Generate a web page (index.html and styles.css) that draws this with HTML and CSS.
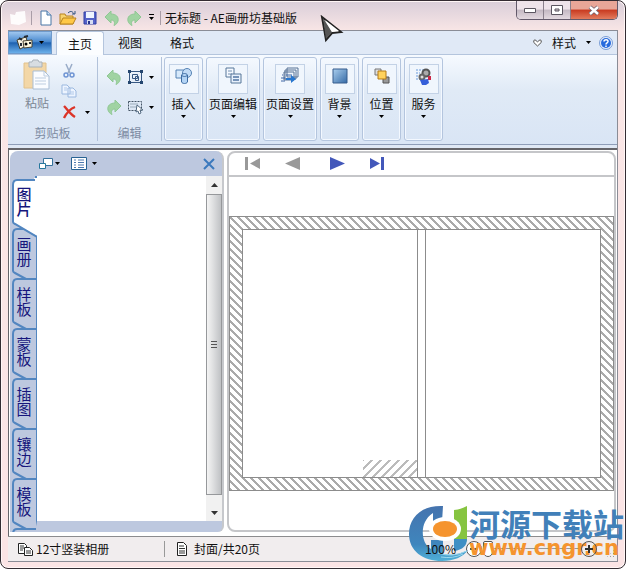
FILE: index.html
```html
<!DOCTYPE html>
<html lang="zh-CN">
<head>
<meta charset="utf-8">
<title>无标题 - AE画册坊基础版</title>
<link rel="stylesheet" href="styles.css">
</head>
<body>
<svg class="defs" aria-hidden="true">
  <symbol id="undo" viewBox="0 0 16 16"><path d="M1 7 7 1v3c5 0 8 3 7 7-.4 2-2 3.500-4 4.500 1-3 .5-5.500-3-5.500v3z" fill="#a0d3a2" stroke="#8fc794"/></symbol>
  <symbol id="redo" viewBox="0 0 16 16"><path d="M15 7 9 1v3C4 4 1 7 2 11c.4 2 2 3.500 4 4.500-1-3-.5-5.500 3-5.500v3z" fill="#a0d3a2" stroke="#8fc794"/></symbol>
  <symbol id="down" viewBox="0 0 5 3"><path d="M0 0h5L2.500 3z" fill="#000"/></symbol>
  <symbol id="tabshape" viewBox="0 0 26 58"><path d="M26 1H7Q3 1 3 6v37q0 1 2 2l11 6h10z" fill="#bdc8df"/><path d="M26 1H7Q3 1 3 6v37q0 1 2 2l11 6" fill="none" stroke="#5286c0" stroke-width="2"/></symbol>
</svg>
<div class="window">
  <header class="titlebar">
    <span class="cell app"><svg width="18" height="16" viewBox="0 0 18 16"><path d="M1 4 6 5l1-3 9-1 1 11-7 3-8-1z" fill="#fff" opacity=".9"/></svg></span>
    <i class="rule"></i>
    <button class="cell" aria-label="新建"><svg width="14" height="16" viewBox="0 0 14 16"><path d="M2 1h6l4 4v10H2z" fill="#fff" stroke="#4877a6"/><path d="M8 1v4h4" fill="#c9def5" stroke="#4877a6"/></svg></button>
    <button class="cell" aria-label="打开"><svg width="18" height="16" viewBox="0 0 18 16"><path d="M1 14V4h5l1 2h7v8z" fill="#f8d36e" stroke="#b98320"/><path d="M1 14 4 8h13l-3 6z" fill="#ffc847" stroke="#b98320"/><path d="M9 3c3-3 5-1 6 1m1-3v3h-3" fill="none" stroke="#33537f"/></svg></button>
    <button class="cell" aria-label="保存"><svg width="14" height="14" viewBox="0 0 14 14"><path d="M1 1h12v12H1z" fill="#5562c8" stroke="#303ea4"/><path d="M3 1h8v6H3z" fill="#eef4ff"/><path d="M4 9h6v4H4z" fill="#d5dcf2"/><path d="M5 10h2v3H5z" fill="#27338c"/></svg></button>
    <button class="cell" aria-label="撤销"><svg width="16" height="16"><use href="#undo"/></svg></button>
    <button class="cell" aria-label="重做"><svg width="16" height="16"><use href="#redo"/></svg></button>
    <button class="cell narrow" aria-label="自定义"><svg width="5" height="7" viewBox="0 0 5 7"><path d="M0 0h5v1H0zM0 3h5L2.500 6z"/></svg></button>
    <i class="rule"></i>
    <h1>无标题 - AE画册坊基础版</h1>
    <div class="winbtns">
      <button aria-label="最小化"><svg width="14" height="8" viewBox="0 0 14 8"><path d="M1.500 2.500h11v4h-11z" fill="#fff" stroke="#5b5661"/></svg></button>
      <button aria-label="最大化"><svg width="12" height="10" viewBox="0 0 12 10"><path d="M.5.5h11v9H.5zM4 4v2h4V4z" fill="#fff" fill-rule="evenodd" stroke="#5b5661"/></svg></button>
      <button class="close" aria-label="关闭"><svg width="12" height="11" viewBox="0 0 12 11"><path d="m2 2 8 7m0-7L2 9" stroke="#70606c" stroke-width="4"/><path d="m2 2 8 7m0-7L2 9" stroke="#fff" stroke-width="2.400"/></svg></button>
    </div>
  </header>

  <div class="client">
    <nav class="tabbar">
      <button class="appmenu" aria-label="应用程序菜单"><svg width="18" height="16" viewBox="0 0 18 16"><path d="m1 5 9-3 2 8-8 4z" fill="#f6efdd" stroke="#46412e"/><path d="m7 6 9-1v7l-8 1z" fill="#fff9df" stroke="#4b4535"/><circle cx="10" cy="9" r="1.500"/><path d="m3 3 3 2M5 8v3M13 8h2M8 2l4-1" stroke="#252c36" stroke-width="2"/></svg><svg class="arrow" width="5" height="3"><use href="#down"/></svg></button>
      <button class="tab active">主页</button>
      <button class="tab">视图</button>
      <button class="tab">格式</button>
      <div class="right">
        <svg width="9" height="8" viewBox="0 0 9 8"><path d="M4.500 7 .8 3.500V1.500L2 .8l2.500 2L7 .8l1.200.7v2z" fill="#fff" stroke="#555"/></svg>
        <button class="style">样式 <svg class="arrow" width="5" height="3"><use href="#down"/></svg></button>
        <button class="help" aria-label="帮助"><svg width="14" height="14" viewBox="0 0 14 14"><circle cx="7" cy="7" r="6.500" fill="#e7effc" stroke="#7a9dd6"/><circle cx="7" cy="7" r="5" fill="#286bdd"/><path d="M5 5.500C5 3 9.300 3 9 5.500 8.800 7 7 6.700 7 8.500M7 9.500v1.500" fill="none" stroke="#fff" stroke-width="1.500"/></svg></button>
      </div>
    </nav>

    <section class="ribbon">
      <div class="group clip">
        <div class="tools">
          <button class="paste"><svg width="28" height="32" viewBox="0 0 28 32"><path d="M1 4h22v25H1z" fill="#f3d7a7" stroke="#e2c28c"/><path d="M6 3h3l1-2h5l1 2h3v5H6z" fill="#d8dde2" stroke="#a9b2ba"/><path d="M10 12h11l5 5v13H10z" fill="#fafcff" stroke="#a9bdd4"/><path d="M21 12v5h5M12 19h11m-11 3h11m-11 3h11" fill="none" stroke="#bdcde0"/></svg><span>粘贴</span></button>
          <div class="mini">
            <button aria-label="剪切"><svg width="12" height="15" viewBox="0 0 12 15"><path d="m3 1 4 9M9 1 5 10" stroke="#99acc8" stroke-width="1.500"/><circle cx="3" cy="12" r="2" fill="none" stroke="#6f94d3" stroke-width="1.500"/><circle cx="9" cy="12" r="2" fill="none" stroke="#6f94d3" stroke-width="1.500"/></svg></button>
            <button aria-label="复制"><svg width="16" height="14" viewBox="0 0 16 14"><path d="M1 1h5l3 3v6H1zM7 4h5l3 3v6H7z" fill="#edf4ff" stroke="#9bb8df"/><path d="M3 4h3M3 6h3m3 2h4m-4 2h4" stroke="#b1c9e9"/></svg></button>
            <button aria-label="删除"><svg width="15" height="14" viewBox="0 0 15 14"><path d="M2 1c3 3 6 8 11 11M13 2C8 4 4 9 2 13" fill="none" stroke="#dc3428" stroke-width="2.400"/></svg></button>
            <button class="drop" aria-label="删除选项"><svg width="5" height="3"><use href="#down"/></svg></button>
          </div>
        </div>
        <span class="caption">剪贴板</span>
      </div>
      <div class="group edit">
        <div class="grid">
          <button aria-label="撤销"><svg width="16" height="16"><use href="#undo"/></svg></button>
          <button aria-label="组合"><svg width="17" height="16" viewBox="0 0 17 16"><path d="M2.500 2.500h12v11h-12zM5.500 5.500h5v4h-5zM8.500 7.500h3v4h-3z" fill="none" stroke="#365782"/><path d="M1 1h3v3H1zM13 1h3v3h-3zM1 12h3v3H1zM13 12h3v3h-3z" fill="#24466f"/></svg></button>
          <button aria-label="组合选项"><svg width="5" height="3"><use href="#down"/></svg></button>
          <button aria-label="重做"><svg width="16" height="16"><use href="#redo"/></svg></button>
          <button aria-label="选择"><svg width="17" height="16" viewBox="0 0 17 16"><path d="M1.500 2.500h13v9h-13z" fill="none" stroke="#456" stroke-dasharray="2 1"/><path d="M3 5h8M3 8h8" stroke="#9aabb9"/><path d="m10 6 6 5h-3l1 3-2 1-1-3-2 1z" fill="#fff" stroke="#536a80"/></svg></button>
          <button aria-label="选择选项"><svg width="5" height="3"><use href="#down"/></svg></button>
        </div>
        <span class="caption">编辑</span>
      </div>
      <div class="boxes">
        <button class="box"><span class="frame"><svg width="18" height="18" viewBox="0 0 18 18"><path d="M1 3h9v8H1z" fill="#d6e9fb" stroke="#5582b4"/><circle cx="12" cy="6" r="4.500" fill="#c1dbf6" stroke="#5582b4"/><path d="M6.500 8v7c1 2 5 2 6 0V8c-1-2-5-2-6 0zm0 0c1 2 5 2 6 0" fill="#b3d4f5" stroke="#3e6ca2"/></svg></span>插入<svg width="5" height="3"><use href="#down"/></svg></button>
        <button class="box"><span class="frame"><svg width="18" height="18" viewBox="0 0 18 18"><path d="M2 1h8v9H2z" fill="#f5f9ff" stroke="#577699"/><path d="M4 4h4M4 7h4" stroke="#7591b2"/><path d="M7 7h10v9H7z" fill="#e8f1fc" stroke="#577699"/><path d="M9 10h6m-6 3h6" stroke="#5275a2" stroke-width="1.500"/></svg></span>页面编辑<svg width="5" height="3"><use href="#down"/></svg></button>
        <button class="box"><span class="frame"><svg width="18" height="18" viewBox="0 0 18 18"><path d="M6 1h11v9H6zM4 3h11v9H4zM3 5h10v8H3z" fill="#edf4fc" stroke="#587395"/><path d="M5 8h6M1 8h1M0 11h4M0 14h4" stroke="#3f66a5"/><path d="M5 11h5V8l5 4-5 4v-3H5z" fill="#2877cf"/></svg></span>页面设置<svg width="5" height="3"><use href="#down"/></svg></button>
        <button class="box"><span class="frame"><svg width="16" height="16" viewBox="0 0 16 16"><defs><linearGradient id="blue" x2="1" y2="1"><stop stop-color="#abcfee"/><stop offset="1" stop-color="#356aa6"/></linearGradient></defs><path d="M1 1h14v14H1z" fill="url(#blue)" stroke="#365c8d"/></svg></span>背景<svg width="5" height="3"><use href="#down"/></svg></button>
        <button class="box"><span class="frame"><svg width="16" height="16" viewBox="0 0 16 16"><path d="M1 1h6v6H1z" fill="#ddd" stroke="#777"/><path d="M9 9h6v6H9z" fill="#999" stroke="#555"/><path d="M4 3h8v8H4z" fill="#ffd25c" stroke="#b57b17"/></svg></span>位置<svg width="5" height="3"><use href="#down"/></svg></button>
        <button class="box"><span class="frame"><svg width="17" height="17" viewBox="0 0 17 17"><path d="M1 2h9M1 5h4M1 8h3M1 11h4" stroke="#699adb" stroke-dasharray="2 1"/><circle cx="11" cy="5" r="3.500" fill="#aaa" stroke="#555" stroke-width="2"/><circle cx="7" cy="9" r="2.500" fill="#ddd" stroke="#666" stroke-width="2"/><path d="M13 8h3v4h-3z" fill="#cb2747"/><path d="m5 12 8-1 1 4-3 2H7z" fill="#355fd9"/></svg></span>服务<svg width="5" height="3"><use href="#down"/></svg></button>
      </div>
    </section>

    <main class="work">
      <aside class="side">
        <div class="sidehead">
          <button aria-label="层叠"><svg width="14" height="13" viewBox="0 0 14 13"><path d="M4.500 1.500h9v7h-9z" fill="#fff" stroke="#36729d"/><path d="M.5 6.500h6v5h-6z" fill="#fff" stroke="#26779d"/></svg><svg width="5" height="3"><use href="#down"/></svg></button>
          <button class="second" aria-label="列表"><svg width="16" height="13" viewBox="0 0 16 13"><path d="M.5.5h15v12H.5z" fill="#fff" stroke="#286293"/><path d="M3 3h2M3 5.500h2M3 8h2M3 10.500h2M7 3h6M7 5.500h6M7 8h6M7 10.500h6" stroke="#4c79af"/></svg><svg width="5" height="3"><use href="#down"/></svg></button>
          <button class="x" aria-label="关闭面板"><svg width="12" height="12" viewBox="0 0 12 12"><path d="m1 1 10 10M11 1 1 11" stroke="#3b79bd" stroke-width="2"/></svg></button>
        </div>
        <div class="sidebody">
          <div class="sidetabs">
            <button class="stab on"><svg viewBox="0 0 27 60"><path d="M27 0h-3v2H7Q3 2 3 7v37q0 1 2 2l22 12z" fill="#fff"/><path d="M25 2H7Q3 2 3 7v37q0 1 2 2l22 13" fill="none" stroke="#5286c0" stroke-width="2"/></svg><span>图片</span></button>
            <button class="stab"><svg viewBox="0 0 26 58"><use href="#tabshape"/></svg><span>画册</span></button>
            <button class="stab"><svg viewBox="0 0 26 58"><use href="#tabshape"/></svg><span>样板</span></button>
            <button class="stab"><svg viewBox="0 0 26 58"><use href="#tabshape"/></svg><span>蒙板</span></button>
            <button class="stab"><svg viewBox="0 0 26 58"><use href="#tabshape"/></svg><span>插图</span></button>
            <button class="stab"><svg viewBox="0 0 26 58"><use href="#tabshape"/></svg><span>镶边</span></button>
            <button class="stab"><svg viewBox="0 0 26 58"><use href="#tabshape"/></svg><span>模板</span></button>
            <button class="stab" aria-label="更多"><svg viewBox="0 0 26 58"><use href="#tabshape"/></svg></button>
          </div>
          <div class="list"></div>
          <div class="scroll">
            <button aria-label="向上"><svg width="7" height="4" viewBox="0 0 7 4"><path d="M0 4h7L3.500 0z" fill="#333"/></svg></button>
            <div class="thumb"><svg width="6" height="8" viewBox="0 0 6 8"><path d="M0 .5h6M0 3.500h6M0 6.500h6" stroke="#555"/></svg></div>
            <button class="dn" aria-label="向下"><svg width="7" height="4" viewBox="0 0 7 4"><path d="M0 0h7L3.500 4z" fill="#333"/></svg></button>
          </div>
        </div>
      </aside>
      <section class="editor">
        <div class="pager">
          <button aria-label="首页"><svg width="15" height="13" viewBox="0 0 15 13"><path d="M0 0h3v13H0zM15 1v11L5 6.500z" fill="#999"/></svg></button>
          <button aria-label="上一页"><svg width="15" height="13" viewBox="0 0 15 13"><path d="M15 0v13L0 6.500z" fill="#999"/></svg></button>
          <button class="next" aria-label="下一页"><svg width="15" height="13" viewBox="0 0 15 13"><path d="M0 0v13l15-6.500z" fill="#4358ba"/></svg></button>
          <button aria-label="末页"><svg width="15" height="13" viewBox="0 0 15 13"><path d="M0 1v11l10-5.500zM11 0h3v13h-3z" fill="#4358ba"/></svg></button>
        </div>
        <div class="canvas">
          <div class="hatch">
            <div class="page"><i class="corner"></i></div>
            <div class="spine"></div>
            <div class="page"></div>
          </div>
        </div>
      </section>
    </main>

    <footer class="status">
      <span class="album"><svg width="17" height="15" viewBox="0 0 17 15"><path d="M1.500 1.500h6l2 2v8h-8z" fill="#fff" stroke="#222"/><path d="M3 4h4M3 6h4M3 8h3" stroke="#333"/><path d="M7.500 5.500h5l3 3v5h-8z" fill="#fff" stroke="#222"/><path d="M9 9h5m-5 2h5" stroke="#333"/></svg>12寸竖装相册</span>
      <span class="pages"><svg width="12" height="14" viewBox="0 0 12 14"><path d="M1.500.5h6l3 3v10h-9z" fill="#fff" stroke="#222"/><path d="M3 4h5M3 6.500h6M3 9h6M3 11h6" stroke="#333"/></svg>封面/共20页</span>
      <div class="zoom">
        <label for="zoom">100%</label>
        <button aria-label="缩小"><svg width="18" height="18" viewBox="0 0 18 18"><circle cx="9" cy="9" r="7.500" fill="#fff" stroke="#555"/><path d="M5 9h8" stroke="#555" stroke-width="2"/></svg></button>
        <input id="zoom" type="range" min="0" max="100" value="0">
        <button class="plus" aria-label="放大"><svg width="18" height="18" viewBox="0 0 18 18"><circle cx="9" cy="9" r="7.500" fill="none" stroke="#555"/><path d="M5 9h8M9 5v8" stroke="#333" stroke-width="2"/></svg></button>
        <i class="grip"></i>
      </div>
    </footer>
  </div>

  <svg class="cursor" width="24" height="28" viewBox="0 0 24 28"><path d="m2 2 19 15-9 1-6 7z" fill="#e6e2e3" stroke="#222" stroke-width="2"/><path d="m3 3 9 14-6 7z" fill="#555"/><path d="m5 5 14 11-7 1z" fill="#fff"/></svg>
  <div class="mark">
    <svg width="60" height="56" viewBox="0 0 60 56">
      <defs><linearGradient id="cblue" x2="0" y2="1"><stop stop-color="#4573ae"/><stop offset=".7" stop-color="#3f86bd"/><stop offset="1" stop-color="#4fb0d8"/></linearGradient></defs>
      <path d="M35 1C13 0 1 13 1 29c0 17 14 27 33 27 12 0 21-4 26-11-8 4-16 6-25 4V35H23v9C14 39 13 25 17 17q3-6 8-9v9h9z" fill="url(#cblue)"/>
      <path d="M46 5q5 0 13-4v34q-2 8-13 9z" fill="#86c440"/>
      <path d="M46 34h13q0 10-13 12z" fill="#3f8fc4"/>
      <ellipse cx="37" cy="24" rx="16" ry="12" fill="#fff"/>
      <ellipse cx="37" cy="24" rx="12" ry="8" fill="#f5942e"/>
      <path d="M30 48q14 5 29-2M33 52q12 2 22-3" fill="none" stroke="#9bd8ee"/>
    </svg>
    <div><strong>河源下载站</strong><b>www.cngr.cn</b></div>
  </div>
</div>
</body>
</html>
```
FILE: styles.css
```css
* { box-sizing: border-box; }
body {
  margin: 0;
  font: 12px/16px "Noto Sans CJK SC", sans-serif;
  color: #111;
  background: #fff;
}
button {
  margin: 0; padding: 0; border: 0; background: none;
  font: inherit; color: inherit;
  display: flex; align-items: center; justify-content: center;
  white-space: nowrap;
}
svg { display: block; flex: none; }
.defs { position: absolute; width: 0; height: 0; }

.window {
  position: relative;
  display: flex; flex-direction: column;
  height: 100vh; min-height: 480px;
  padding: 0 7px 6px;
  border: 1px solid #332c32; border-radius: 8px;
  background: linear-gradient(#d9ced9, #f9e6e6 30px, #fbe4e5);
  box-shadow: inset 0 0 0 1px #fff6f6;
  overflow: hidden;
}

/* title bar */
.titlebar { display: flex; align-items: center; height: 29px; padding-top: 4px; flex: none; }
.cell { width: 22px; height: 20px; flex: none; display: flex; align-items: center; justify-content: center; }
.cell.app { width: 20px; }
.cell.narrow { width: 12px; }
.rule { width: 1px; height: 14px; margin: 0 3px; background: #a99da7; flex: none; }
h1 { margin: 0 0 0 1px; font: inherit; white-space: nowrap; }
.winbtns {
  display: flex; align-self: flex-start; margin: -4px 0 0 auto;
  height: 19px; border: 1px solid #62596a; border-top: 0;
  border-radius: 0 0 5px 5px; overflow: hidden;
}
.winbtns button {
  width: 27px; border-right: 1px solid #8a808c;
  background: linear-gradient(#eee3ea 45%, #c4b9c3 50%, #e3d9e0);
}
.winbtns .close { width: 46px; border: 0; background: linear-gradient(#e8a698 45%, #c83a20 50%, #e37c5e); }

/* client area */
.client { flex: 1; min-height: 0; display: flex; flex-direction: column; border: 1px solid #8a8c96; border-left: 0; background: #dfe8f5; }
.tabbar { display: flex; height: 24px; flex: none; background: #e0e9f6; border-bottom: 1px solid #b4c5dd; }
.appmenu { width: 44px; gap: 5px; background: linear-gradient(#9fc6ee, #4b8bd0 45%, #1f62b0 52%, #6cb0ea); border: 1px solid #6f9acb; }
.tab { width: 52px; }
.tab.active { width: 48px; height: 24px; margin-left: 4px; border: 1px solid #b4c5dd; border-bottom: 0; border-radius: 3px 3px 0 0; background: #fbfdff; }
.right { display: flex; align-items: center; margin-left: auto; padding-right: 4px; gap: 8px; }
.style { gap: 10px; margin-left: 2px; }

.ribbon { display: flex; height: 90px; flex: none; padding: 2px 0 3px; border-bottom: 1px solid #8e9db8; background: linear-gradient(#f6faff, #e0eaf6 40%, #d9e5f5); }
.group { display: flex; flex-direction: column; justify-content: space-between; align-items: center; border-right: 1px solid #b2c2da; padding: 2px 0 0; }
.clip { width: 90px; }
.edit { width: 64px; }
.caption { color: #7d8ca3; }
.tools { display: flex; gap: 4px; width: 100%; padding-left: 12px; }
.paste { flex-direction: column; justify-content: flex-start; gap: 4px; width: 34px; color: #7d8794; }
.mini { display: grid; grid-template-columns: 22px 14px; grid-template-rows: 22px 20px 22px; }
.mini button { grid-column: 1; }
.mini .drop { grid-column: 2; grid-row: 3; }
.grid { display: grid; grid-template-columns: 24px 20px 12px; grid-template-rows: 30px 30px; padding-top: 3px; }
.boxes { display: flex; gap: 3px; padding-left: 2px; }
.box { flex-direction: column; justify-content: flex-start; min-width: 39px; padding: 6px 2px 0; border: 1px solid #b4c5de; border-radius: 3px; box-shadow: inset 0 0 0 1px #f3f8ff; }
.frame { display: flex; align-items: center; justify-content: center; width: 30px; height: 30px; margin-bottom: 2px; padding-bottom: 6px; border: 1px solid #c3d2e6; background: #f0f6fd; }
.box > svg { margin-top: 3px; }

/* work area */
.work { flex: 1; min-height: 0; display: flex; gap: 3px; margin-top: 3px; padding: 1px 1px 4px; border: 1px solid #65656a; border-width: 2px 0 0 1px; background: #fff; }
.side { display: flex; flex-direction: column; width: 214px; flex: none; border-radius: 8px 8px 6px 0; border-right: 2px solid #c6c8cc; background: #bdc8df; overflow: hidden; }
.sidehead { display: flex; align-items: center; height: 25px; flex: none; padding: 0 7px 0 29px; }
.sidehead button { gap: 2px; }
.sidehead .second { margin-left: 11px; gap: 5px; }
.sidehead .x { margin-left: auto; }
.sidebody { flex: 1; min-height: 0; display: flex; }
.sidetabs { width: 25px; flex: none; padding-top: 2px; }
.stab { position: relative; width: 25px; height: 50px; color: #16167c; }
.stab svg { position: absolute; top: 0; left: 0; width: 26px; height: 58px; }
.stab.on svg { width: 27px; height: 60px; }
.stab.on { z-index: 2; }
.stab span { position: relative; padding: 0 0 3px 2px; font-size: 15px; line-height: 20px; writing-mode: vertical-rl; text-orientation: upright; }
.stab.on span { font-weight: 500; }
.list { flex: 1; border-left: 2px solid #5286c0; background: #fff; border-bottom: 11px solid #bdc8df; }
.scroll { display: flex; flex-direction: column; width: 16px; margin-bottom: 11px; background: #f1f1f1; }
.scroll button { height: 18px; flex: none; }
.scroll .dn { height: 26px; padding-top: 10px; }
.thumb { flex: 1; display: flex; align-items: center; justify-content: center; border: 1px solid #96989b; background: linear-gradient(90deg, #f4f4f4, #e0e1e2 40%, #bfc1c4); }
.editor { flex: 1; display: flex; flex-direction: column; border: 2px solid #c5c6c9; border-radius: 8px; background: #fff; min-width: 0; overflow: hidden; }
.pager { display: flex; align-items: center; gap: 25px; height: 24px; flex: none; padding: 0 0 2px 16px; border-bottom: 2px solid #c5c6c9; }
.pager .next { margin-left: 5px; }
.canvas { flex: 1; min-height: 0; padding: 39px 0; }
.hatch {
  display: flex; height: 100%; padding: 12px; border: 1px solid #8c8c8c;
  background: linear-gradient(45deg, #aaa 7%, transparent 7% 43%, #aaa 43% 57%, transparent 57% 93%, #aaa 93%) 0 0 / 8px 8px #fff;
}
.page { flex: 1; position: relative; border: 1px solid #8c8c8c; background: #fff; }
.spine { width: 7px; border: 1px solid #8c8c8c; border-width: 1px 0; background: #fff; }
.corner {
  position: absolute; right: 0; bottom: 0; width: 54px; height: 17px;
  background: linear-gradient(135deg, #bbb 6%, transparent 6% 44%, #bbb 44% 56%, transparent 56% 94%, #bbb 94%) 0 0 / 9px 9px;
}

/* status bar */
.status { display: flex; align-items: center; height: 25px; flex: none; padding-left: 9px; border-top: 1px solid #8c8c8e; background: #f1edee; }
.status span { display: flex; align-items: center; gap: 2px; }
.album { width: 148px; border-right: 1px solid #999; }
.pages { margin-left: 11px; }
.status .pages { gap: 6px; }
.zoom { display: flex; align-items: center; margin-left: auto; }
.zoom label { margin-right: 9px; }
.zoom label, .zoom .plus { position: relative; z-index: 3; }
.zoom input { width: 97px; height: 18px; margin: 0; appearance: none; background: linear-gradient(#999, #999) 0 8px / 100% 1px no-repeat; }
.zoom input::-webkit-slider-thumb { appearance: none; width: 10px; height: 16px; border: 1px solid #555; border-radius: 2px 2px 5px 5px; background: #fff; }
.grip { align-self: flex-end; width: 9px; height: 9px; margin: 0 2px 0 8px; background: radial-gradient(circle, #999 1px, transparent 1px) 0 0 / 3px 3px; clip-path: polygon(100% 0, 100% 100%, 0 100%); }

/* overlays */
.cursor { position: absolute; left: 319px; top: 14px; }
.mark { position: absolute; right: 1px; bottom: 7px; display: flex; gap: 1px; z-index: 2; pointer-events: none; white-space: nowrap; }
.mark div { display: flex; flex-direction: column; gap: 4px; padding-top: 2px; }
.mark strong { font-size: 31px; line-height: 31px; font-weight: 700; color: #4180b9; }
.mark b { font: bold 21px/12px "DejaVu Sans", sans-serif; color: #f5942e; }
```
